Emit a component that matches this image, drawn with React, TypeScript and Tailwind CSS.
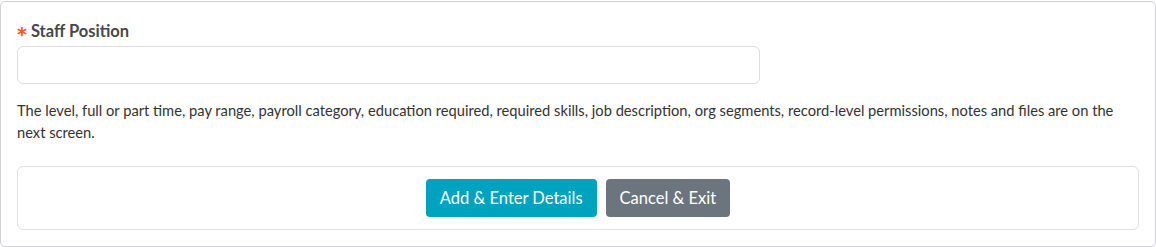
import React from 'react';

export default function App() {
  return (
    <div className="w-[1156px] h-[247px] bg-white pt-px" style={{ fontFamily: 'Lato, "Open Sans", sans-serif' }}>
      <div className="h-[246px] border border-[#cfcfd4] rounded-[5px] p-4">
        {/* Field */}
        <label className="flex items-center gap-[4px] h-6 pt-[2px] text-[16.5px] font-bold text-[#484848]">
          <span
            className="text-[#f05a22] text-[19px] leading-none mt-[6px] font-bold"
            style={{ fontFamily: '"DejaVu Sans", sans-serif' }}
          >
            *
          </span>
          Staff Position
        </label>
        <input
          type="text"
          className="mt-1 block w-[743px] h-[38px] border border-[#dcdce2] rounded-[6px] px-3 outline-none"
        />

        <p className="mt-[15px] text-[14.7px] leading-[22px] text-[#333]">
          The level, full or part time, pay range, payroll category, education required, required skills, job description, org segments, record-level permissions, notes and files are on the next screen.
        </p>

        {/* Actions */}
        <div className="mt-[23px] border border-[#e0e0e6] rounded-[6px] py-3 flex justify-center gap-[9px]">
          <button className="h-[38px] px-[14px] rounded-[4px] bg-[#00a3bf] text-white text-[16.5px]">
            Add &amp; Enter Details
          </button>
          <button className="h-[38px] px-[14px] rounded-[4px] bg-[#6c757d] text-white text-[16.5px]">
            Cancel &amp; Exit
          </button>
        </div>
      </div>
    </div>
  );
}
